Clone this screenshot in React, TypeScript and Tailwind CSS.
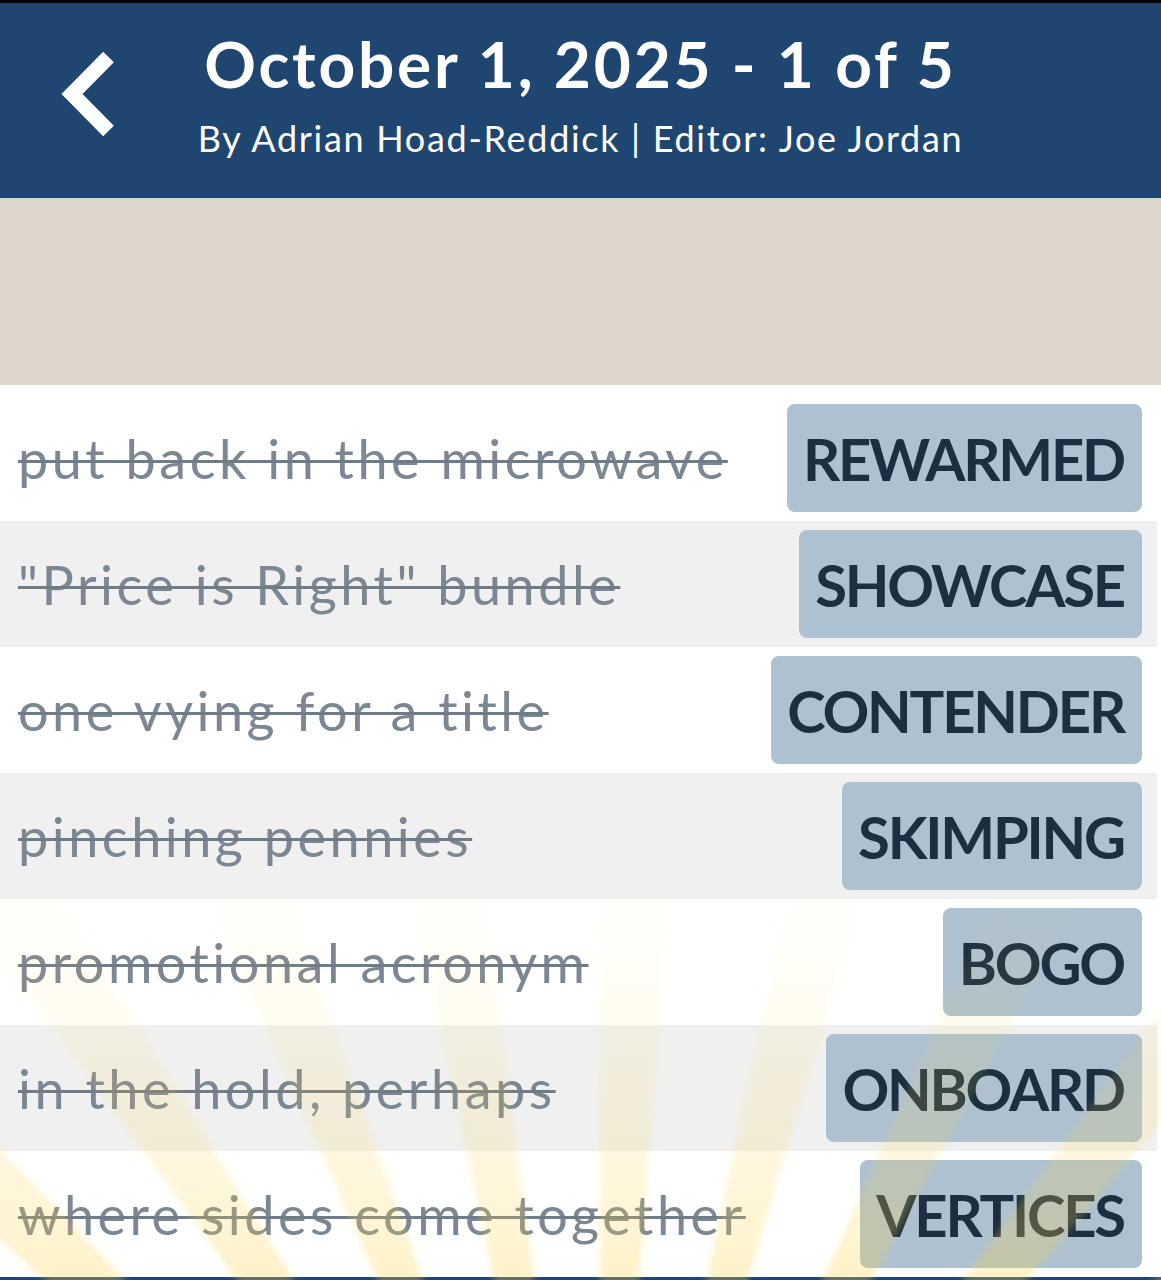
import React from "react";

const rows = [
  { clue: "put back in the microwave", answer: "REWARMED" },
  { clue: "\"Price is Right\" bundle", answer: "SHOWCASE" },
  { clue: "one vying for a title", answer: "CONTENDER" },
  { clue: "pinching pennies", answer: "SKIMPING" },
  { clue: "promotional acronym", answer: "BOGO" },
  { clue: "in the hold, perhaps", answer: "ONBOARD" },
  { clue: "where sides come together", answer: "VERTICES" },
];

function Rays() {
  const ox = 600;
  const oy = 900;
  const stepDeg = 6;
  const R = 1400;
  const polys: string[] = [];
  for (let d = -84; d <= 84; d += stepDeg * 2) {
    const a1 = ((d - 90) * Math.PI) / 180;
    const a2 = ((d - 90 + stepDeg * 0.75) * Math.PI) / 180;
    polys.push(
      `${ox},${oy} ${ox + R * Math.cos(a1)},${oy + R * Math.sin(a1)} ${ox + R * Math.cos(a2)},${oy + R * Math.sin(a2)}`
    );
  }
  return (
    <svg
      className="pointer-events-none absolute left-0 top-[880px]"
      width="1161"
      height="400"
      viewBox="0 0 1161 400"
    >
      <defs>
        <linearGradient id="fade" x1="0" y1="0" x2="0" y2="400" gradientUnits="userSpaceOnUse">
          <stop offset="0" stopColor="#fcd34d" stopOpacity="0" />
          <stop offset="0.3" stopColor="#fcd34d" stopOpacity="0.07" />
          <stop offset="0.7" stopColor="#fcd34d" stopOpacity="0.18" />
          <stop offset="1" stopColor="#fcd34d" stopOpacity="0.3" />
        </linearGradient>
        <filter id="soft" x="-10%" y="-10%" width="120%" height="120%">
          <feGaussianBlur stdDeviation="3" />
        </filter>
      </defs>
      <g filter="url(#soft)">
        {polys.map((p, i) => (
          <polygon key={i} points={p} fill="url(#fade)" />
        ))}
      </g>
    </svg>
  );
}

export default function App() {
  return (
    <div className="relative w-[1161px] h-[1280px] overflow-hidden bg-white" style={{ fontFamily: "Lato, 'Noto Sans', sans-serif" }}>
      <header className="relative h-[198px] border-t-[3px] border-black bg-[#1f4670] flex flex-col items-center">
        <svg className="absolute left-[40px] top-[37px]" width="100" height="110" viewBox="0 0 100 110">
          <polyline points="68.5,17 32,54 68.5,91" fill="none" stroke="white" strokeWidth="15" strokeLinejoin="miter" strokeLinecap="butt" />
        </svg>
        <h1 className="mt-[29px] text-[64px] leading-[64px] font-bold text-white tracking-[2.8px]">October 1, 2025 - 1 of 5</h1>
        <p className="mt-[24px] text-[36px] leading-[36px] text-white tracking-[1.7px]">By Adrian Hoad-Reddick | Editor: Joe Jordan</p>
      </header>
      <div className="h-[187px] bg-[#ded8cc]" />
      <div className="pt-[10px]">
        {rows.map((r, i) => (
          <div
            key={i}
            className={`mr-[4px] h-[126px] flex items-center justify-between pl-[18px] pr-[15px] ${i % 2 === 1 ? "bg-[#f0f0f0]" : "bg-white"}`}
          >
            <span className="text-[54px] tracking-[3.5px] text-[#7d8792] line-through decoration-[3px] decoration-[#6f7b87]">{r.clue}</span>
            <span className="h-[108px] flex items-center rounded-[8px] bg-[#aec1d0] pl-[16px] pr-[18px] text-[58px] tracking-[-2.2px] font-bold text-[#1c2f40]">
              {r.answer}
            </span>
          </div>
        ))}
      </div>
      <div className="h-[10px] bg-[#1f4670]" />
      <Rays />
    </div>
  );
}
